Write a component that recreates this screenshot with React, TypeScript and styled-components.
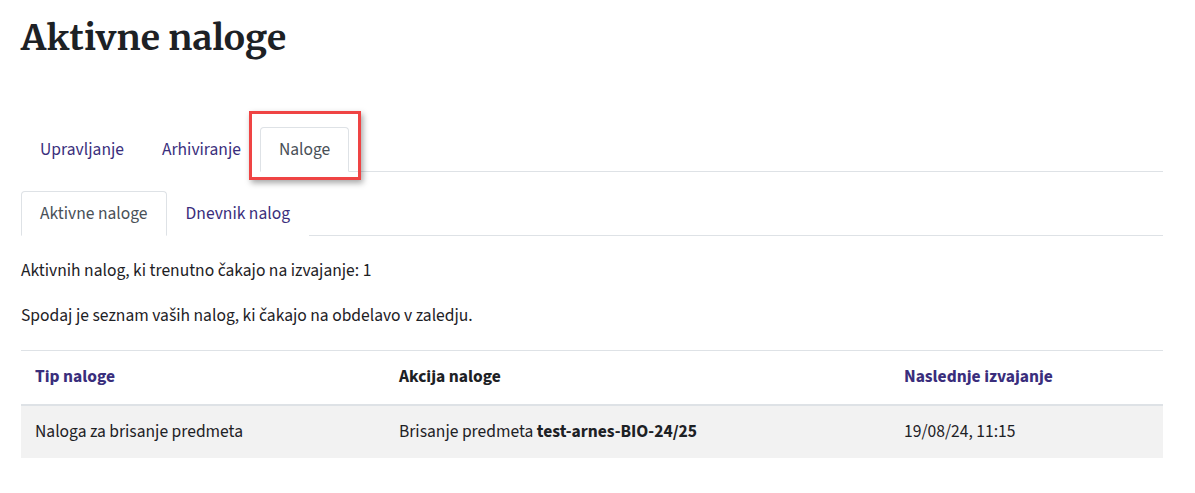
import React from "react";
import styled, { createGlobalStyle } from "styled-components";

const GlobalStyle = createGlobalStyle`
  html, body { margin: 0; padding: 0; background: #fff; }
  body {
    font-family: "Source Sans 3", "Source Sans Pro", Lato, "Liberation Sans", sans-serif;
    font-size: 17.5px;
    line-height: 26px;
    color: #1d2125;
  }
`;

const LINK = "#3a2e7c";

const Page = styled.main`
  padding: 16px 32px 30px 21px;
`;

const Title = styled.h1`
  margin: 0 0 68px;
  font-family: Merriweather, "Noto Serif", "DejaVu Serif", serif;
  font-weight: 700;
  font-size: 35.5px;
  line-height: 43px;
  color: #1d2125;
`;

const TabList = styled.ul<{ $gap?: number }>`
  display: flex;
  list-style: none;
  margin: 0 0 ${(p) => p.$gap ?? 0}px;
  padding: 0;
  border-bottom: 1px solid #dee2e6;
`;

const TabItem = styled.li`
  position: relative;
  margin-bottom: -1px;
`;

const TabLink = styled.a<{ $active?: boolean }>`
  display: block;
  padding: 8.5px 18px;
  border: 1px solid ${(p) => (p.$active ? "#dee2e6" : "transparent")};
  border-bottom-color: ${(p) => (p.$active ? "#fff" : "transparent")};
  border-radius: 4px 4px 0 0;
  background: #fff;
  color: ${(p) => (p.$active ? "#495057" : LINK)};
  text-decoration: none;
  line-height: 26px;
  cursor: pointer;
`;

const Highlight = styled.span`
  position: absolute;
  left: -11px;
  right: -12px;
  top: -16px;
  bottom: -8px;
  border: 3px solid #ef4444;
  box-shadow: 2px 3px 6px rgba(0, 0, 0, 0.35);
  pointer-events: none;
`;

const Text = styled.p<{ $mb: number }>`
  margin: 0 0 ${(p) => p.$mb}px;
`;

const Table = styled.table`
  width: 100%;
  table-layout: fixed;
  border-collapse: collapse;
  border-top: 1px solid #dee2e6;
`;

const Col = styled.col<{ $w: number }>`
  width: ${(p) => p.$w}px;
`;

const Th = styled.th<{ $link?: boolean }>`
  text-align: left;
  font-weight: 700;
  padding: 13px 14px 14px;
  line-height: 26px;
  color: ${(p) => (p.$link ? LINK : "#1d2125")};
  border-bottom: 2px solid #dee2e6;
`;

const Tr = styled.tr`
  background: #f2f2f2;
`;

const Td = styled.td`
  padding: 13px 14px;
  line-height: 26px;
  vertical-align: top;
`;

export default function App() {
  return (
    <>
      <GlobalStyle />
      <Page>
        <Title>Aktivne naloge</Title>

        <TabList $gap={19}>
          <TabItem>
            <TabLink>Upravljanje</TabLink>
          </TabItem>
          <TabItem>
            <TabLink>Arhiviranje</TabLink>
          </TabItem>
          <TabItem>
            <TabLink $active>Naloge</TabLink>
            <Highlight />
          </TabItem>
        </TabList>

        <TabList $gap={22}>
          <TabItem>
            <TabLink $active>Aktivne naloge</TabLink>
          </TabItem>
          <TabItem>
            <TabLink>Dnevnik nalog</TabLink>
          </TabItem>
        </TabList>

        <Text $mb={19}>Aktivnih nalog, ki trenutno čakajo na izvajanje: 1</Text>
        <Text $mb={21}>Spodaj je seznam vaših nalog, ki čakajo na obdelavo v zaledju.</Text>

        <Table>
          <colgroup>
            <Col $w={364} />
            <Col $w={505} />
            <Col $w={273} />
          </colgroup>
          <thead>
            <tr>
              <Th $link>Tip naloge</Th>
              <Th>Akcija naloge</Th>
              <Th $link>Naslednje izvajanje</Th>
            </tr>
          </thead>
          <tbody>
            <Tr>
              <Td>Naloga za brisanje predmeta</Td>
              <Td>
                Brisanje predmeta <b>test-arnes-BIO-24/25</b>
              </Td>
              <Td>19/08/24, 11:15</Td>
            </Tr>
          </tbody>
        </Table>
      </Page>
    </>
  );
}
